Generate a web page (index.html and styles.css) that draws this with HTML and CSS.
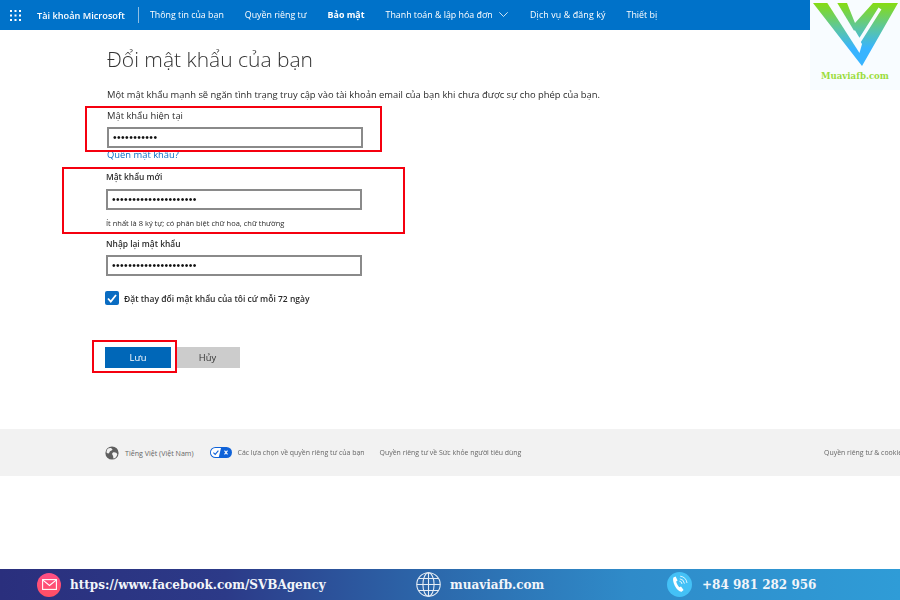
FILE: index.html
```html
<!DOCTYPE html>
<html lang="vi">
<head>
<meta charset="utf-8">
<title>Đổi mật khẩu của bạn</title>
<link rel="stylesheet" href="styles.css">
</head>
<body>
<div class="page">
  <header class="topbar">
    <svg class="waffle" width="11" height="11" viewBox="0 0 11 11" fill="#fff"><rect x="0" y="0" width="2" height="2"/><rect x="4.5" y="0" width="2" height="2"/><rect x="9" y="0" width="2" height="2"/><rect x="0" y="4.5" width="2" height="2"/><rect x="4.5" y="4.5" width="2" height="2"/><rect x="9" y="4.5" width="2" height="2"/><rect x="0" y="9" width="2" height="2"/><rect x="4.5" y="9" width="2" height="2"/><rect x="9" y="9" width="2" height="2"/></svg>
    <span class="brand">Tài khoản Microsoft</span>
    <span class="divider"></span>
    <nav class="nav">
      <a>Thông tin của bạn</a>
      <a>Quyền riêng tư</a>
      <a class="active">Bảo mật</a>
      <a class="has-caret">Thanh toán &amp; lập hóa đơn
        <svg width="9" height="5" viewBox="0 0 9 5" fill="none" stroke="#fff" stroke-width="0.8"><path d="M0.3 0.3 4.5 4.5 8.7 0.3"/></svg>
      </a>
      <a class="wide">Dịch vụ &amp; đăng ký</a>
      <a>Thiết bị</a>
    </nav>
  </header>

  <main class="content">
    <h1>Đổi mật khẩu của bạn</h1>
    <p class="intro">Một mật khẩu mạnh sẽ ngăn tình trạng truy cập vào tài khoản email của bạn khi chưa được sự cho phép của bạn.</p>

    <div class="field first">
      <label>Mật khẩu hiện tại</label>
      <div class="input"><span class="dots">•••••••••••</span></div>
      <a class="forgot">Quên mật khẩu?</a>
    </div>

    <div class="field second">
      <label class="strong">Mật khẩu mới</label>
      <div class="input"><span class="dots">•••••••••••••••••••••</span></div>
      <p class="hint">Ít nhất là 8 ký tự; có phân biệt chữ hoa, chữ thường</p>
    </div>

    <div class="field third">
      <label class="strong">Nhập lại mật khẩu</label>
      <div class="input"><span class="dots">•••••••••••••••••••••</span></div>
    </div>

    <div class="check">
      <span class="box"><svg width="10" height="9" viewBox="0 0 10 9" fill="none" stroke="#fff" stroke-width="1.8"><path d="M1 4.5 3.8 7.5 9 1"/></svg></span>
      <span class="check-label">Đặt thay đổi mật khẩu của tôi cứ mỗi 72 ngày</span>
    </div>

    <div class="actions">
      <button class="btn primary">Lưu</button>
      <button class="btn">Hủy</button>
    </div>
  </main>

  <footer class="legal">
    <svg class="globe" width="14" height="14" viewBox="0 0 14 14"><circle cx="7" cy="7" r="6.6" fill="#5f5f5f"/><path d="M3 2.5C5 1.5 7 2 7.5 3.5 7 5 5 4.5 4.5 6 4.5 7.5 3 8 1.5 6.5 1.5 5 2 3.5 3 2.5ZM8 6.5C10 6 12 7 12.3 8.5 11.5 11 10 12.5 8.5 12.5 8 11 8.5 10 7.5 9 7 8 7 7 8 6.5Z" fill="#f2f2f2"/></svg>
    <span class="lang">Tiếng Việt (Việt Nam)</span>
    <svg class="toggle" width="22" height="11" viewBox="0 0 22 11"><rect width="22" height="11" rx="5.5" fill="#0f62d8"/><path d="M6 .9H11L8.8 10.1H5.5A4.6 4.6 0 0 1 5.5 .9Z" fill="#fff"/><path d="M3.4 5.6 5.2 7.4 8.4 3.6" fill="none" stroke="#0f62d8" stroke-width="1.1"/><path d="M14.5 3.7 17.5 7.3M17.5 3.7 14.5 7.3" stroke="#fff" stroke-width="1.1"/></svg>
    <span class="choice">Các lựa chọn về quyền riêng tư của bạn</span>
    <span class="health">Quyền riêng tư về Sức khỏe người tiêu dùng</span>
    <span class="cookies">Quyền riêng tư &amp; cookie</span>
  </footer>

  <div class="promo">
    <div class="promo-item mail">
      <span class="badge pink"><svg width="15" height="11" viewBox="0 0 15 11" fill="none" stroke="#fff" stroke-width="1.1"><rect x=".6" y=".6" width="13.8" height="9.8"/><path d="M.6 .8 7.5 6.5 14.4 .8"/></svg></span>
      <span>https://www.facebook.com/SVBAgency</span>
    </div>
    <div class="promo-item web">
      <svg width="25" height="25" viewBox="0 0 25 25" fill="none" stroke="#e6edf5" stroke-width="1.1"><circle cx="12.5" cy="12.5" r="11.7"/><ellipse cx="12.5" cy="12.5" rx="5.6" ry="11.7"/><path d="M12.5 .8V24.2M.8 12.5H24.2M2.6 6.5H22.4M2.6 18.5H22.4"/></svg>
      <span>muaviafb.com</span>
    </div>
    <div class="promo-item phone">
      <span class="badge cyan"><svg width="17" height="19" viewBox="0 0 17 19" fill="none"><path d="M2.4 2.6 4.6 1.4 6.6 5.4 5.2 6.6C5.6 8.6 6.8 10.8 8.4 12.2L10 11.4 12.6 15 10.6 16.8C8.6 17.2 5.8 14.6 3.8 10.8 2.2 7.6 1.6 4.4 2.4 2.6Z" fill="#fff"/><path d="M8.4 6.2A3 3 0 0 1 11 9M8.8 3.8A5.4 5.4 0 0 1 13.4 8.6M9.2 1.2A8 8 0 0 1 16 8" stroke="#fff" stroke-width=".8"/></svg></span>
      <span>+84 981 282 956</span>
    </div>
  </div>

  <div class="mark mark-current"></div>
  <div class="mark mark-new"></div>
  <div class="mark mark-save"></div>

  <div class="logo">
    <svg class="logo-mark" width="90" height="68" viewBox="0 0 90 68">
      <defs><linearGradient id="vg" gradientUnits="userSpaceOnUse" x1="0" y1="3" x2="0" y2="66"><stop offset="0" stop-color="#86dc12"/><stop offset=".4" stop-color="#5cc6a0"/><stop offset=".72" stop-color="#38b4ff"/><stop offset="1" stop-color="#38b4ff"/></linearGradient></defs>
      <path fill="url(#vg)" d="M3 3H37L45 23 63 3H88L52 66Z"/>
      <path fill="#f8fcff" d="M17 2.5H27L52 44 49.5 53Z"/>
      <path fill="none" stroke="#f8fcff" stroke-width="3.4" d="M70 8.5 49.5 41 43.5 31"/>
    </svg>
    <span class="logo-text">Muaviafb.com</span>
  </div>
</div>
</body>
</html>
```
FILE: styles.css
```css
* { box-sizing: border-box; }
html, body { margin: 0; padding: 0; background: #fff; }
body { font-family: "Open Sans", "Noto Sans", sans-serif; color: #2b2b2b; }
.page { position: relative; width: 900px; height: 600px; overflow: hidden; display: flex; flex-direction: column; }

.topbar { height: 30px; width: 810px; background: #0072c9; color: #fff; display: flex; align-items: center; padding-left: 10px; font-size: 8.85px; flex: none; filter: blur(.3px); }
.waffle { flex: none; }
.brand { margin-left: 16px; font-weight: 600; font-size: 9.2px; }
.divider { width: 1px; height: 16px; background: #8fbfe4; margin: 0 11px 0 13px; }
.nav { display: flex; gap: 21px; }
.nav a { white-space: nowrap; }
.nav .active { font-weight: 700; }
.nav .wide { letter-spacing: .12px; }
.has-caret { margin-right: 1px; }
.has-caret svg { margin-left: 4px; vertical-align: 1px; }

.content { height: 399px; flex: none; padding-left: 107px; display: flex; flex-direction: column; align-items: flex-start; filter: blur(.3px); }
h1 { margin: 16px 0 0; font-size: 21px; line-height: 27px; font-weight: 300; color: #333; }
.intro { margin: 15px 0 0; font-size: 9.38px; line-height: 14px; }
.field label { display: block; font-size: 9.4px; line-height: 14px; }
.field label.strong { font-size: 8.4px; font-weight: 600; }
.input { width: 256px; height: 21px; border: 2px solid #8a8a8a; display: flex; align-items: center; padding-left: 4px; background: #fff; }
.dots { font-size: 10.4px; letter-spacing: .4px; color: #111; font-family: "Liberation Sans", sans-serif; }
.first { margin-top: 7px; }
.first label { margin-bottom: 4px; }
.forgot { display: block; font-size: 9.4px; line-height: 12px; color: #0a6cc2; margin-top: 1px; }
.second { margin-top: 9px; margin-left: -1px; }
.second label { margin-bottom: 5px; }
.hint { margin: 8px 0 0; font-size: 7.5px; line-height: 11px; }
.third { margin-top: 8px; margin-left: -1px; }
.third label { margin-bottom: 4px; }
.check { display: flex; align-items: center; gap: 5px; margin: 15px 0 0 -2px; font-size: 8.5px; font-weight: 600; }
.box { width: 14px; height: 14px; border-radius: 2px; background: #0a6cc2; display: flex; align-items: center; justify-content: center; }
.actions { display: flex; margin: 42px 0 0 -2px; gap: 4px; }
.btn { width: 66px; height: 21px; border: 0; padding: 0; background: #ccc; color: #333; font: 400 9.4px "Open Sans", sans-serif; }
.btn + .btn { width: 65px; }
.btn.primary { background: #0067b8; color: #fff; }

.legal { height: 47px; flex: none; background: #f2f2f2; display: flex; align-items: center; padding-left: 105px; font-size: 6.95px; color: #666; white-space: nowrap; filter: blur(.3px); }
.lang { margin-left: 6px; font-size: 7.1px; }
.toggle { margin-left: 16px; }
.choice { margin-left: 6px; }
.health { margin-left: 15px; }
.cookies { position: absolute; left: 824px; }

.promo { margin-top: 93px; height: 31px; flex: none; background: linear-gradient(90deg, #2a2f7d 0%, #2c3a88 25%, #2c68ab 48%, #2f8bc9 70%, #2f9cd7 100%); display: flex; align-items: center; color: #f2f5fa; font: 700 12px "DejaVu Serif", serif; }
.promo-item { display: flex; align-items: center; flex: none; gap: 9px; }
.mail { margin-left: 37px; width: 379px; }
.web { width: 251px; gap: 9px; }
.phone { gap: 10px; }
.badge { width: 24px; height: 24px; border-radius: 50%; display: flex; align-items: center; justify-content: center; }
.pink { background: linear-gradient(180deg, #ff4f86, #ff4f63); }
.cyan { background: #44c1f6; width: 25px; height: 25px; }

.mark { position: absolute; border: 2px solid #f5000f; }
.mark-current { left: 85px; top: 106px; width: 297px; height: 46px; }
.mark-new { left: 62px; top: 167px; width: 343px; height: 67px; }
.mark-save { left: 92px; top: 340px; width: 85px; height: 33px; }

.logo { position: absolute; left: 810px; top: 0; width: 90px; height: 90px; background: #f8fcff; display: flex; flex-direction: column; align-items: center; }
.logo-text { font: 700 8.6px "DejaVu Serif", serif; color: #9bdc3c; margin-top: 3px; white-space: nowrap; }
```
